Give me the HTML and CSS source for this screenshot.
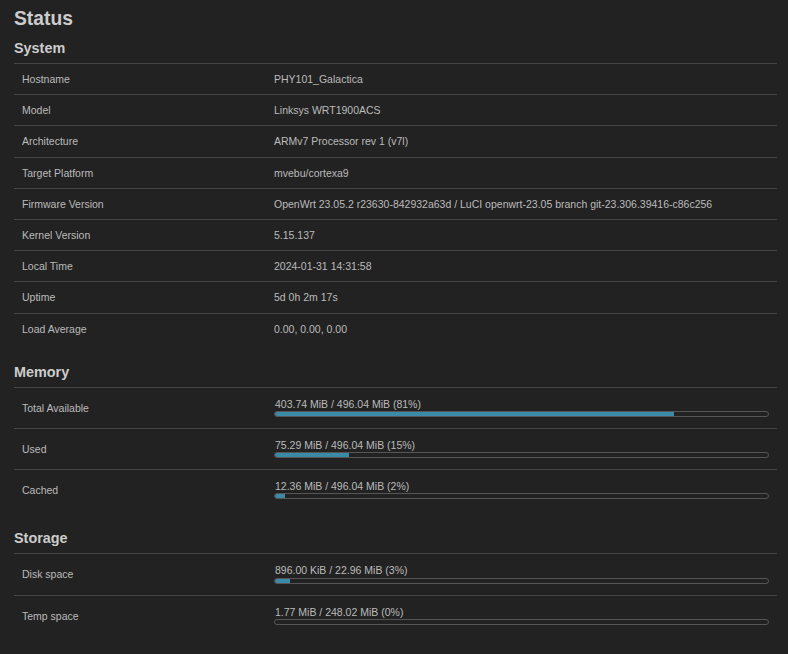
FILE: index.html
```html
<!DOCTYPE html>
<html lang="en">

<head>
    <meta charset="UTF-8">
    <title>Status</title>
    <link rel="stylesheet" href="styles.css">
</head>

<body>
    <div class="main">
        <h2>Status</h2>

        <div class="section first">
            <h3>System</h3>
            <table class="info">
                <tr><td class="td-label">Hostname</td><td>PHY101_Galactica</td></tr>
                <tr><td class="td-label">Model</td><td>Linksys WRT1900ACS</td></tr>
                <tr><td class="td-label">Architecture</td><td>ARMv7 Processor rev 1 (v7l)</td></tr>
                <tr><td class="td-label">Target Platform</td><td>mvebu/cortexa9</td></tr>
                <tr><td class="td-label">Firmware Version</td><td>OpenWrt 23.05.2 r23630-842932a63d / LuCI openwrt-23.05 branch git-23.306.39416-c86c256</td></tr>
                <tr><td class="td-label">Kernel Version</td><td>5.15.137</td></tr>
                <tr><td class="td-label">Local Time</td><td>2024-01-31 14:31:58</td></tr>
                <tr><td class="td-label">Uptime</td><td>5d 0h 2m 17s</td></tr>
                <tr><td class="td-label">Load Average</td><td>0.00, 0.00, 0.00</td></tr>
            </table>
        </div>

        <div class="section">
            <h3>Memory</h3>
            <table class="info">
                <tr>
                    <td class="td-label">Total Available</td>
                    <td class="td-bar"><div class="bar-text">403.74 MiB / 496.04 MiB (81%)</div><div class="bar"><div class="fill" style="width: 81%"></div></div></td>
                </tr>
                <tr>
                    <td class="td-label">Used</td>
                    <td class="td-bar"><div class="bar-text">75.29 MiB / 496.04 MiB (15%)</div><div class="bar"><div class="fill" style="width: 15%"></div></div></td>
                </tr>
                <tr>
                    <td class="td-label">Cached</td>
                    <td class="td-bar"><div class="bar-text">12.36 MiB / 496.04 MiB (2%)</div><div class="bar"><div class="fill" style="width: 2%"></div></div></td>
                </tr>
            </table>
        </div>

        <div class="section">
            <h3>Storage</h3>
            <table class="info">
                <tr>
                    <td class="td-label">Disk space</td>
                    <td class="td-bar"><div class="bar-text">896.00 KiB / 22.96 MiB (3%)</div><div class="bar"><div class="fill" style="width: 3%"></div></div></td>
                </tr>
                <tr>
                    <td class="td-label">Temp space</td>
                    <td class="td-bar"><div class="bar-text">1.77 MiB / 248.02 MiB (0%)</div><div class="bar"><div class="fill" style="width: 0%"></div></div></td>
                </tr>
            </table>
        </div>
    </div>
</body>

</html>
```

FILE: styles.css
```css
body {
    margin: 0;
    background-color: #222222;
    color: #cccccc;
    font-family: 'Liberation Sans', Arial, sans-serif;
}
.main {
    padding: 0 11px 20px 14px;
}
h2 {
    margin: 7px 0 0;
    font-size: 19.3px;
    line-height: 24px;
    font-weight: bold;
    color: #cccccc;
}
h3 {
    margin: 0;
    padding-bottom: 5px;
    font-size: 14.4px;
    line-height: 20px;
    font-weight: bold;
    color: #cccccc;
}
.section {
    margin-top: 18px;
}
.section.first {
    margin-top: 7px;
}
.info {
    width: 100%;
    border-collapse: collapse;
    font-size: 10.5px;
    line-height: 14.2px;
}
.info tr {
    border-top: 1px solid #444444;
}
.info td {
    padding: 8px 8px;
    vertical-align: middle;
    color: #bbbbbb;
}
.info td.td-bar {
    padding-top: 9px;
}
.td-label {
    width: 236px;
}
.bar-text {
    padding-left: 1px;
}
.bar {
    height: 4px;
    margin: 0 0 3px;
    border: 1px solid #555555;
    border-radius: 3px;
    overflow: hidden;
}
.fill {
    height: 100%;
    background-color: #3b8aa8;
}
```
